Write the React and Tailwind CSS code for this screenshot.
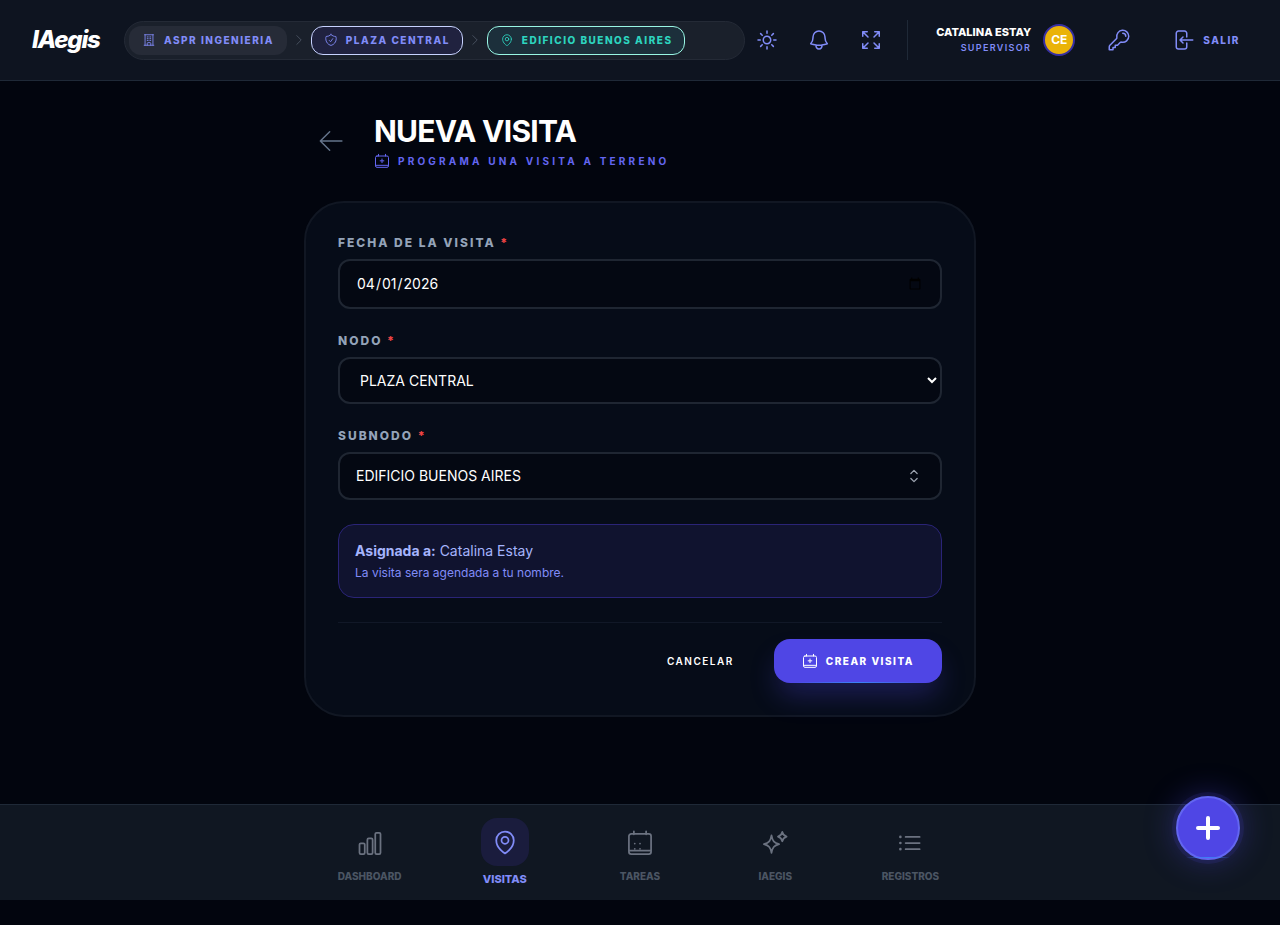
import {
  HiOutlineSun,
  HiOutlineBell,
  HiOutlineKey,
  HiOutlineMapPin,
  HiOutlineShieldCheck,
  HiOutlineChevronRight,
  HiOutlineBuildingOffice,
  HiOutlineArrowsPointingOut,
  HiOutlineChevronUpDown,
} from 'react-icons/hi2';

function StrokeIcon({ className, strokeWidth = 1.5, children }) {
  return (
    <svg
      className={className}
      viewBox="0 0 24 24"
      fill="none"
      stroke="currentColor"
      strokeWidth={strokeWidth}
      strokeLinecap="round"
      strokeLinejoin="round"
      aria-hidden="true"
    >
      {children}
    </svg>
  );
}

function CalendarPlusIcon({ className }) {
  return (
    <StrokeIcon className={className}>
      <path d="M6.75 2v2.5M17.25 2v2.5M4.5 4.5h15a2.25 2.25 0 0 1 2.25 2.25v12.5a2.25 2.25 0 0 1-2.25 2.25h-15a2.25 2.25 0 0 1-2.25-2.25V6.75A2.25 2.25 0 0 1 4.5 4.5ZM2.25 18.5h19.5M12 9v5.5M9.25 11.75h5.5" />
    </StrokeIcon>
  );
}

function CalendarDotsIcon({ className }) {
  return (
    <StrokeIcon className={className}>
      <path d="M6.75 2v2.5M17.25 2v2.5M4.5 4.25h15a2 2 0 0 1 2 2v13.25a2 2 0 0 1-2 2h-15a2 2 0 0 1-2-2V6.25a2 2 0 0 1 2-2ZM2.5 18.5h19" />
      <path d="M7.5 12.5h.01M12 12.5h.01M7.5 17h.01M12 17h.01" />
    </StrokeIcon>
  );
}

function ChartIcon({ className }) {
  return (
    <StrokeIcon className={className}>
      <rect x="3" y="12.25" width="4.5" height="9.25" rx="1.125" />
      <rect x="9.75" y="8" width="4.5" height="13.5" rx="1.125" />
      <rect x="16.5" y="3.25" width="4.5" height="18.25" rx="1.125" />
    </StrokeIcon>
  );
}

function SparklesIcon({ className }) {
  return (
    <StrokeIcon className={className}>
      <path d="M9 5.5C9.8 10.2 11.1 11.8 15.5 13 11.1 14.2 9.8 15.8 9 20.5 8.2 15.8 6.9 14.2 2.5 13 6.9 11.8 8.2 10.2 9 5.5Z" />
      <path d="M18.25 2.5C18.75 5 19.45 5.8 21.95 6.5 19.45 7.2 18.75 8 18.25 10.5 17.75 8 17.05 7.2 14.55 6.5 17.05 5.8 17.75 5 18.25 2.5Z" />
    </StrokeIcon>
  );
}

function ListIcon({ className }) {
  return (
    <StrokeIcon className={className}>
      <path d="M8.25 6.75h12M8.25 12h12M8.25 17.25h12" />
      <path d="M3.75 6.75h.01M3.75 12h.01M3.75 17.25h.01" strokeWidth={2.25} />
    </StrokeIcon>
  );
}

function LogoutIcon({ className }) {
  return (
    <StrokeIcon className={className}>
      <path d="M15.75 9V5.25A2.25 2.25 0 0 0 13.5 3h-6a2.25 2.25 0 0 0-2.25 2.25v13.5A2.25 2.25 0 0 0 7.5 21h6a2.25 2.25 0 0 0 2.25-2.25V15M12 9l-3 3m0 0 3 3m-3-3h12.75" />
    </StrokeIcon>
  );
}

function BackIcon({ className }) {
  return (
    <StrokeIcon className={className} strokeWidth={1.25}>
      <path d="M10 20 2 12l8-8M2 12h18.5" />
    </StrokeIcon>
  );
}

const headerActions = [
  { label: 'Cambiar tema', icon: HiOutlineSun },
  { label: 'Notificaciones', icon: HiOutlineBell },
  { label: 'Pantalla completa', icon: HiOutlineArrowsPointingOut },
];

const navItems = [
  { label: 'Dashboard', icon: ChartIcon },
  { label: 'Visitas', icon: HiOutlineMapPin, active: true },
  { label: 'Tareas', icon: CalendarDotsIcon },
  { label: 'IAegis', icon: SparklesIcon },
  { label: 'Registros', icon: ListIcon },
];

const crumbClass = 'flex h-[29px] items-center gap-2 rounded-xl border px-3 text-[10px] font-extrabold uppercase tracking-[0.15em]';
const labelClass = 'block text-xs leading-4 font-extrabold uppercase tracking-[2px] text-[#94a3b8]';
const fieldClass = 'w-full rounded-xl border-2 border-[#1f2632] bg-[#040812] text-sm text-white outline-none focus:border-[#6366f1]';

function Header() {
  return (
    <header className="flex h-[81px] items-center border-b border-[#1f2937] bg-[#0e1420] px-8">
      <a href="#" className="mr-6 w-[68px] shrink-0 text-2xl font-extrabold italic tracking-tighter text-white">
        IAegis
      </a>

      <nav aria-label="Ruta" className="flex h-[39px] min-w-0 flex-1 items-center rounded-[20px] border border-[#242a36] bg-[#1a202b] px-1">
        <a href="#" className={`${crumbClass} border-transparent bg-[#262b37] text-[#818cf8]`}>
          <HiOutlineBuildingOffice className="size-3.5" />
          ASPR Ingenieria
        </a>
        <HiOutlineChevronRight className="mx-[5px] size-3.5 shrink-0 text-[#4b5563]" />
        <a href="#" className={`${crumbClass} border-[#c7d2fe] bg-[#20223f] text-[#818cf8]`}>
          <HiOutlineShieldCheck className="size-3.5" />
          Plaza Central
        </a>
        <HiOutlineChevronRight className="mx-[5px] size-3.5 shrink-0 text-[#4b5563]" />
        <a href="#" className={`${crumbClass} border-[#99f6e4] bg-[#1c2f3b] text-[#2dd4bf]`}>
          <HiOutlineMapPin className="size-3.5" />
          Edificio Buenos Aires
        </a>
      </nav>

      <div className="ml-0.5 flex shrink-0 items-center gap-3 text-[#818cf8]">
        {headerActions.map(({ label, icon: Icon }) => (
          <button key={label} type="button" aria-label={label} className="flex size-10 items-center justify-center">
            <Icon className="size-6" />
          </button>
        ))}
      </div>

      <div className="ml-4 flex h-10 shrink-0 items-center border-l border-[#1f2937] pl-7">
        <div className="mr-3 text-right">
          <p className="text-[11px] leading-4 font-extrabold text-white">CATALINA ESTAY</p>
          <p className="text-[9px] leading-4 font-semibold tracking-[0.15em] text-[#818cf8]">SUPERVISOR</p>
        </div>
        <div className="flex size-8 items-center justify-center rounded-full border-2 border-[#3730a3] bg-[#eab308] text-xs font-bold text-white">
          CE
        </div>
        <button type="button" aria-label="Cambiar clave" className="ml-8 text-[#818cf8]">
          <HiOutlineKey className="size-6" />
        </button>
        <button type="button" className="ml-10 flex items-center gap-2 pr-2 text-[10px] font-extrabold tracking-[0.15em] text-[#818cf8]">
          <LogoutIcon className="size-6" />
          SALIR
        </button>
      </div>
    </header>
  );
}

function Field({ id, label, children }) {
  return (
    <div>
      <label htmlFor={id} className={labelClass}>
        {label} <span className="text-[#ef4444]">*</span>
      </label>
      <div className="mt-2">{children}</div>
    </div>
  );
}

function VisitForm() {
  return (
    <form className="mt-8 rounded-[40px] border-2 border-[#111723] bg-[#060c18] p-8" onSubmit={(e) => e.preventDefault()}>
      <div className="space-y-6">
        <Field id="fecha" label="Fecha de la visita">
          <input id="fecha" type="date" defaultValue="2026-04-01" className={`${fieldClass} h-[50px] px-4`} />
        </Field>

        <Field id="nodo" label="Nodo">
          <select id="nodo" className={`${fieldClass} h-[47px] px-4`}>
            <option>PLAZA CENTRAL</option>
          </select>
        </Field>

        <Field id="subnodo" label="Subnodo">
          <button id="subnodo" type="button" className={`${fieldClass} flex h-12 items-center justify-between px-4`}>
            EDIFICIO BUENOS AIRES
            <HiOutlineChevronUpDown className="size-5 text-[#9ca3af]" />
          </button>
        </Field>

        <div className="rounded-2xl border border-[#2a2477] bg-[#10132f] p-4">
          <p className="text-sm leading-5 text-[#a5b4fc]">
            <strong className="font-bold">Asignada a:</strong> Catalina Estay
          </p>
          <p className="mt-1 text-xs leading-4 text-[#818cf8]">La visita sera agendada a tu nombre.</p>
        </div>
      </div>

      <div className="mt-6 flex items-center justify-end gap-3 border-t border-[#111827] pt-4">
        <button type="button" className="h-11 px-7 text-[10px] font-semibold tracking-[0.15em] text-white">
          CANCELAR
        </button>
        <button
          type="submit"
          className="relative flex h-11 items-center gap-2 rounded-2xl bg-[#4f46e5] px-7 text-[10px] font-extrabold tracking-[0.15em] text-white shadow-[0_16px_28px_-4px_rgba(79,70,229,0.3)]"
        >
          <CalendarPlusIcon className="size-4" />
          CREAR VISITA
          <span className="absolute inset-x-4 bottom-0 h-px bg-linear-to-r from-transparent via-[#3b82f6] to-transparent" />
        </button>
      </div>
    </form>
  );
}

function BottomNav() {
  return (
    <nav aria-label="Principal" className="relative flex h-24 justify-center border-t border-[#1f2937] bg-[#101722]">
      <ul className="flex w-full max-w-[676px] justify-between">
        {navItems.map(({ label, icon: Icon, active }) => (
          <li key={label} className="flex-1">
            <a
              href="#"
              className={`flex h-full flex-col items-center gap-1 uppercase ${
                active ? 'pt-[13px] text-[11px] font-extrabold text-[#818cf8]' : 'pt-4 text-[10px] font-extrabold text-[#4b5563]'
              }`}
            >
              <span
                className={`flex items-center justify-center ${
                  active ? 'size-12 rounded-2xl bg-[#1a1c3d]' : 'size-11 text-[#6b7280]'
                }`}
              >
                <Icon className="size-7" />
              </span>
              <span className={active ? 'leading-[18px]' : 'leading-[14px]'}>{label}</span>
            </a>
          </li>
        ))}
      </ul>
      <button
        type="button"
        aria-label="Nueva visita"
        className="absolute -top-[9px] right-10 flex size-16 items-center justify-center rounded-full border-2 border-[#6366f1] bg-[#4f46e5] text-white shadow-[0_0_0_4px_rgba(79,70,229,0.12),0_0_32px_rgba(79,70,229,0.4)]"
      >
        <StrokeIcon className="size-8" strokeWidth={3}>
          <path d="M12 4.5v15M4.5 12h15" />
        </StrokeIcon>
        <span className="absolute inset-x-2 bottom-0 h-px bg-linear-to-r from-transparent via-[#3b82f6] to-transparent" />
      </button>
    </nav>
  );
}

export default function App() {
  return (
    <div className="flex min-h-screen flex-col bg-[#02050e] pb-[25px] font-['Inter',sans-serif]">
      <Header />
      <main className="mx-auto w-full max-w-[672px] flex-1 pt-8 pb-20">
        <div className="flex items-center pl-3.5">
          <button type="button" aria-label="Volver" className="mr-7 text-[#64748b]">
            <BackIcon className="size-7" />
          </button>
          <div>
            <h1 className="text-3xl leading-9 font-bold tracking-tight text-white">NUEVA VISITA</h1>
            <p className="mt-1 flex items-center gap-2 text-[10px] leading-4 font-bold tracking-[0.32em] text-[#6366f1]">
              <CalendarPlusIcon className="size-4" />
              PROGRAMA UNA VISITA A TERRENO
            </p>
          </div>
        </div>
        <VisitForm />
      </main>
      <BottomNav />
    </div>
  );
}
